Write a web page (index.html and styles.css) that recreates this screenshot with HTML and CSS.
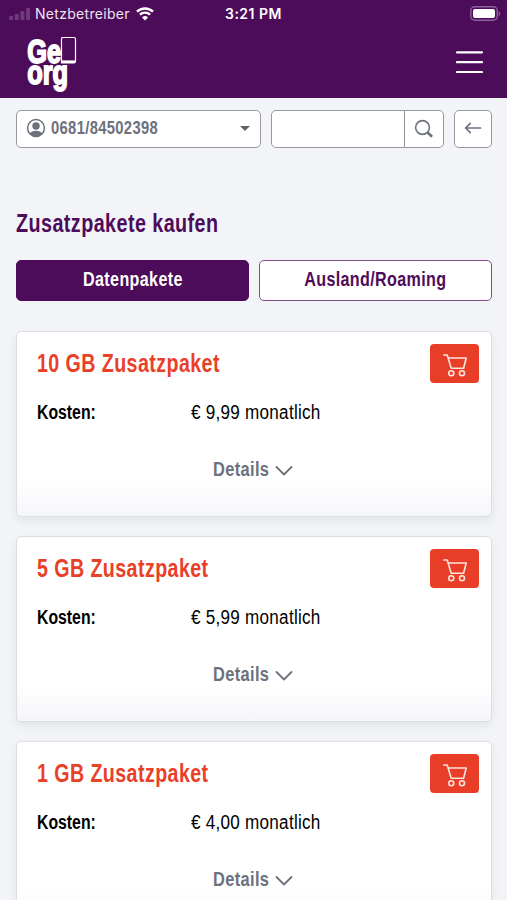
FILE: index.html
```html
<!DOCTYPE html>
<html lang="de">
<head>
<meta charset="utf-8">
<meta name="viewport" content="width=device-width, initial-scale=1">
<title>Zusatzpakete kaufen</title>
<link rel="stylesheet" href="styles.css">
</head>
<body>
<svg width="0" height="0" class="sprite" aria-hidden="true">
  <symbol id="cart" viewBox="0 0 24 24"><path d="M.8 2h3.400l4 13.300h12.400L23.200 5H5.200" stroke-linejoin="round" stroke-linecap="round"/><circle cx="8.300" cy="20.200" r="2.500"/><circle cx="19" cy="20.200" r="2.500"/></symbol>
  <symbol id="chevron" viewBox="0 0 18 12"><path d="M1.500 2l7.500 7.500L16.500 2" stroke-linecap="round" stroke-linejoin="round"/></symbol>
</svg>
<header class="header">
  <div class="status">
    <div class="carrier">
      <svg class="signal" viewBox="0 0 22 14"><rect x="0" y="9" width="4" height="4" rx="1"/><rect x="5.700" y="7" width="4" height="6" rx="1"/><rect x="11.400" y="4" width="4" height="9" rx="1"/><rect x="17.100" y="1" width="4" height="12" rx="1"/></svg>
      <span class="operator">Netzbetreiber</span>
      <svg class="wifi" viewBox="0 0 18 14"><path d="M1 4.700a11.500 11.500 0 0 1 16 0M3.900 7.700a7.300 7.300 0 0 1 10.200 0"/><path class="dot" d="M6 10.500a4.300 4.300 0 0 1 6 0l-3 3z"/></svg>
    </div>
    <div class="time">3:21 PM</div>
    <svg class="battery" viewBox="0 0 31 15"><rect class="shell" x=".8" y=".8" width="26.500" height="13.400" rx="4"/><rect class="charge" x="3" y="3" width="22" height="9" rx="2"/><path class="charge cap" d="M28.700 5.200c2 .8 2 3.800 0 4.600z"/></svg>
  </div>
  <div class="bar">
    <svg class="logo" viewBox="0 0 52 58">
      <text x="1.200" y="27.500" font-size="34" textLength="33.800" lengthAdjust="spacingAndGlyphs">Ge</text>
      <text x="1.200" y="48.500" font-size="34" textLength="40.800" lengthAdjust="spacingAndGlyphs">org</text>
      <path class="phone-shape" d="M36 2.500h12q1.500 0 1.500 1.500v22.500q0 1.500-1.500 1.500H35.500V4z"/><path class="base" d="M36 26.700h13"/>
    </svg>
    <svg class="menu" viewBox="0 0 27 23"><path d="M1 1.300h25M1 11.200h25M1 21h25"/></svg>
  </div>
</header>
<main>
  <div class="tools">
    <div class="box number">
      <svg class="user" viewBox="0 0 20 20"><circle class="ring" cx="10" cy="10" r="8.400"/><circle cx="10" cy="8" r="3.700"/><path d="M3.500 15.600Q5.500 12.700 10 12.700t6.500 2.900Q13.500 18.400 10 18.400t-6.500-2.800z"/></svg>
      <span class="narrow phone">0681/84502398</span>
      <span class="caret"></span>
    </div>
    <div class="box search">
      <div class="field"></div>
      <div class="find"><svg viewBox="0 0 20 20"><circle cx="8.500" cy="8.500" r="6.900"/><path class="handle" d="M13.300 13.300l4.800 4.500"/></svg></div>
    </div>
    <div class="box back"><svg viewBox="0 0 18 14"><path d="M16.500 7H1.500M6.300 2.300L1.500 7l4.800 4.700" stroke-linecap="round" stroke-linejoin="round"/></svg></div>
  </div>
  <h1><span class="narrow">Zusatzpakete kaufen</span></h1>
  <nav class="tabs">
    <div class="tab active"><span class="narrow mid">Datenpakete</span></div>
    <div class="tab"><span class="narrow mid">Ausland/Roaming</span></div>
  </nav>
  <section class="card">
    <div class="top"><h2><span class="narrow">10 GB Zusatzpaket</span></h2><div class="buy"><svg><use href="#cart"/></svg></div></div>
    <div class="cost"><b class="narrow">Kosten:</b><span class="price">€ 9,99 monatlich</span></div>
    <div class="details"><span class="narrow">Details</span><svg><use href="#chevron"/></svg></div>
  </section>
  <section class="card">
    <div class="top"><h2><span class="narrow">5 GB Zusatzpaket</span></h2><div class="buy"><svg><use href="#cart"/></svg></div></div>
    <div class="cost"><b class="narrow">Kosten:</b><span class="price">€ 5,99 monatlich</span></div>
    <div class="details"><span class="narrow">Details</span><svg><use href="#chevron"/></svg></div>
  </section>
  <section class="card">
    <div class="top"><h2><span class="narrow">1 GB Zusatzpaket</span></h2><div class="buy"><svg><use href="#cart"/></svg></div></div>
    <div class="cost"><b class="narrow">Kosten:</b><span class="price">€ 4,00 monatlich</span></div>
    <div class="details"><span class="narrow">Details</span><svg><use href="#chevron"/></svg></div>
  </section>
</main>
</body>
</html>
```
FILE: styles.css
```css
* { box-sizing: border-box; }
body {
  margin: 0;
  height: 900px;
  overflow: hidden;
  background: #f3f4f7;
  font-family: "Liberation Sans", Arial, sans-serif;
  font-size: 20px;
  color: #000;
}
svg { display: block; fill: none; flex: none; }
.sprite { position: absolute; }
.narrow {
  display: inline-block;
  font-weight: bold;
  letter-spacing: .022em;
  white-space: nowrap;
  transform: scaleX(.79);
  transform-origin: left center;
}
.narrow.mid { transform: scaleX(.805); transform-origin: center; }

.header { height: 98px; background: #4d0c5a; color: #fff; }
.status {
  display: grid;
  grid-template-columns: 1fr auto 1fr;
  height: 27px;
  align-items: center;
  padding: 0 8px 0 9px;
  font-family: Inter, sans-serif;
}
.carrier { display: flex; align-items: center; }
.signal { width: 22px; height: 14px; margin-top: 1px; fill: #6d3a7a; }
.operator { margin-left: 4px; font-size: 14px; letter-spacing: .3px; width: 96px; white-space: nowrap; color: #eee3f1; }
.wifi { width: 18px; height: 14px; margin-left: 5px; stroke: #fff; stroke-width: 2.400; }
.wifi .dot { fill: #fff; stroke: none; }
.time { font-size: 14px; font-weight: 600; letter-spacing: .5px; margin-right: 1px; }
.battery { width: 31px; height: 15px; justify-self: end; margin-right: -2px; }
.shell { stroke: #8b619a; stroke-width: 1.400; }
.charge { fill: #fff; }
.cap { fill: #8b619a; }
.bar { display: flex; justify-content: space-between; padding: 8px 24px 0 26px; }
.logo { width: 52px; height: 58px; overflow: visible; stroke: #fff; stroke-width: 1.200; }
.logo text { fill: #fff; stroke-width: 1.900; font-weight: bold; }
.logo .phone-shape { fill: #4d0c5a; }
.logo .base { stroke-width: 2.600; }
.menu { width: 27px; height: 23px; margin-top: 16px; stroke: #fff; stroke-width: 2.200; stroke-linecap: round; }

main { padding: 12px 15px 0 16px; }
.tools { display: flex; gap: 10px; height: 38px; }
.box { display: flex; align-items: center; background: #fff; border: 1.500px solid #96999d; border-radius: 5px; color: #6c717c; }
.number { width: 245px; padding: 0 10px 2px; }
.user { width: 20px; height: 20px; margin-left: -1px; fill: #6c717c; }
.user .ring { fill: none; stroke: #6c717c; stroke-width: 1.500; }
.phone { font-size: 17.500px; margin: 1px 0 0 5px; flex: 1; transform: scaleX(.845); }
.caret { border: 5px solid transparent; border-top-color: #5e626b; border-bottom: 0; }
.search { width: 173px; }
.field { flex: 1; }
.find { width: 39px; align-self: stretch; border-left: 1px solid #909398; display: flex; align-items: center; justify-content: center; }
.find svg { width: 20px; height: 20px; margin-top: -1px; stroke: #6c717c; stroke-width: 1.600; }
.find .handle { stroke-width: 2.600; }
.back { width: 38px; justify-content: center; }
.back svg { width: 18px; height: 14px; margin-top: -2px; stroke: #6c717c; stroke-width: 1.700; }

h1 { margin: 60px 0 0; height: 30px; line-height: 30px; font-size: 25px; color: #4d0c5a; }
.tabs { display: grid; grid-template-columns: 1fr 1fr; gap: 10px; margin-top: 22px; }
.tab { height: 41px; border: 1.500px solid #7f4b8d; border-radius: 5px; background: #fff; color: #4d0c5a; text-align: center; line-height: 36px; }
.active { background: #4d0c5a; border-color: #4d0c5a; color: #fff; }
.card {
  height: 186px;
  padding: 12px 12px 0 20px;
  border: 1px solid #dcdee2;
  border-radius: 5px;
  background: linear-gradient(#fff 80%, #f5f6f9);
  box-shadow: 0 4px 9px rgba(40, 45, 60, .08);
}
.tabs + .card { margin-top: 30px; }
.card + .card { margin-top: 19px; }
.top { display: flex; justify-content: space-between; height: 41px; }
h2 { margin: 0; font-size: 25px; line-height: 39px; color: #e94028; }
h2 .narrow { transform: scaleX(.785); }
.buy { width: 49px; height: 39px; border-radius: 4px; background: #e83e27; display: flex; align-items: center; justify-content: center; }
.buy svg { width: 24px; height: 24px; margin-top: 2px; stroke: #ffe3dd; stroke-width: 1.600; }
.cost { display: grid; grid-template-columns: 154px auto; justify-content: start; margin-top: 15px; line-height: 24px; }
.cost .narrow { letter-spacing: 0; justify-self: start; }
.price { letter-spacing: .3px; white-space: nowrap; transform: scaleX(.855); transform-origin: left center; }
.details { display: flex; margin: 33px 0 0 176px; line-height: 24px; color: #6c717c; }
.details .narrow { width: 62px; transform: scaleX(.82); }
.details svg { width: 18px; height: 12px; margin-top: 8px; stroke: #6c717c; stroke-width: 1.800; }
```
